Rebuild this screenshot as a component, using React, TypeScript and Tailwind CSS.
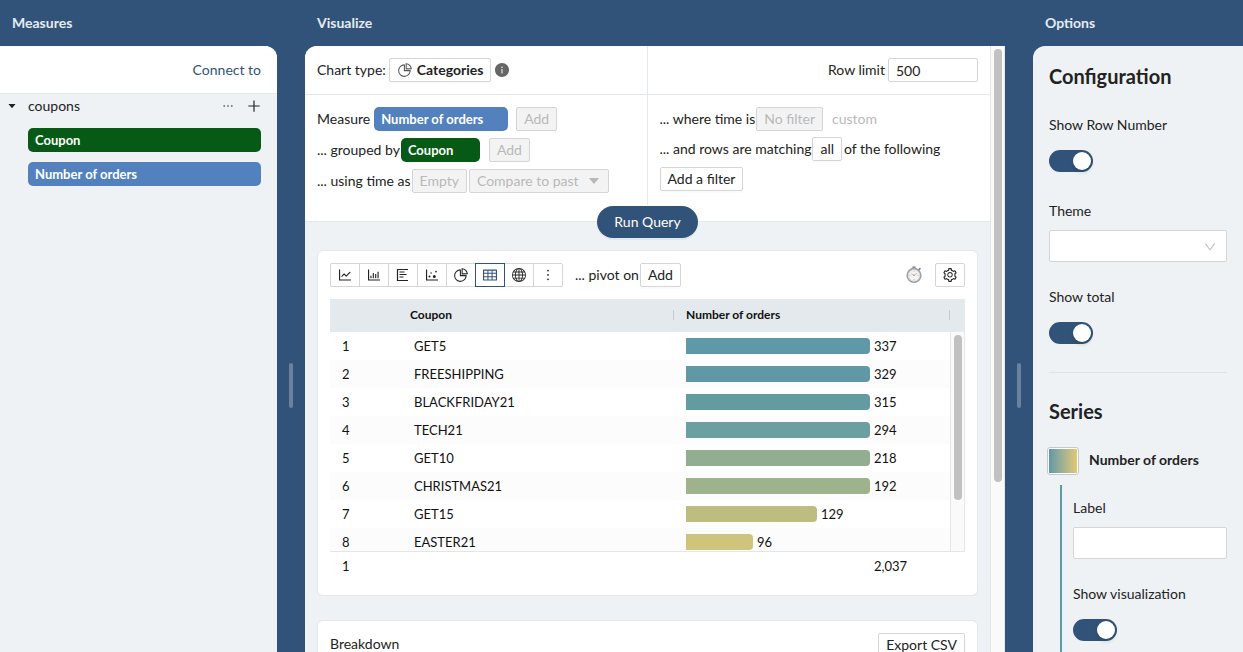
import React from 'react';
import {
  AiFillCaretDown,
  AiFillInfoCircle,
  AiOutlineBarChart,
  AiOutlineDotChart,
  AiOutlineDown,
  AiOutlineEllipsis,
  AiOutlineLineChart,
  AiOutlineMore,
  AiOutlinePieChart,
  AiOutlinePlus,
  AiOutlineSetting,
  AiOutlineTable,
} from 'react-icons/ai';
import { BsGlobe } from 'react-icons/bs';

const rows = [
  { name: 'GET5', value: 337, width: 184, color: '#5f98a6' },
  { name: 'FREESHIPPING', value: 329, width: 184, color: '#6099a5' },
  { name: 'BLACKFRIDAY21', value: 315, width: 184, color: '#649ba3' },
  { name: 'TECH21', value: 294, width: 184, color: '#6c9f9f' },
  { name: 'GET10', value: 218, width: 184, color: '#92ae90' },
  { name: 'CHRISTMAS21', value: 192, width: 184, color: '#9eb28b' },
  { name: 'GET15', value: 129, width: 131, color: '#bdbd7f' },
  { name: 'EASTER21', value: 96, width: 67, color: '#cdc57c' },
];

function Button({
  children,
  disabled = false,
  className = '',
}: {
  children: React.ReactNode;
  disabled?: boolean;
  className?: string;
}) {
  const tone = disabled
    ? 'border-[#d5d5d5] bg-[#f3f3f3] text-[#b9b9b9]'
    : 'border-[#d5d5d5] bg-white text-[#222] shadow-[0_2px_0_rgba(0,0,0,0.015)]';
  return (
    <button
      type="button"
      disabled={disabled}
      className={`flex h-6 shrink-0 items-center rounded-xs border px-[7px] whitespace-nowrap ${tone} ${className}`}
    >
      {children}
    </button>
  );
}

function Tag({ children, className }: { children: React.ReactNode; className: string }) {
  return (
    <div className={`flex h-6 items-center rounded-[5px] pl-[7px] text-[13px] font-bold text-white ${className}`}>
      {children}
    </div>
  );
}

function BarListIcon() {
  return (
    <svg width="16" height="16" viewBox="0 0 16 16" fill="none" stroke="currentColor">
      <path d="M2.5 2v12" strokeWidth="1.2" />
      <path d="M2 2.5h11M4.5 5h5M4.5 7.5h7M4.5 10h4M2 13.5h11" strokeWidth="1" />
    </svg>
  );
}

function StopwatchIcon() {
  return (
    <svg width="18" height="18" viewBox="0 0 18 18" fill="none">
      <path d="M7.4 0.4h3.2v2.4H7.4z" fill="#8a8d93" />
      <path d="M13.8 3.8l1.2-1.2" stroke="#777a80" strokeWidth="1.5" strokeLinecap="round" />
      <circle cx="9" cy="9.4" r="6.8" fill="#f4f4f1" stroke="#9b9ea6" strokeWidth="1.6" />
      <circle cx="9" cy="9.4" r="5.6" stroke="#d4d5d8" strokeWidth="0.8" />
      <path d="M9 4.8v1M9 13v1M4.4 9.4h1M12.6 9.4h1" stroke="#a4a6aa" strokeWidth="0.7" />
      <path d="M6.2 7.5L9 9.4l3-2.2" stroke="#c9a19b" strokeWidth="0.8" />
      <circle cx="9" cy="9.4" r="0.6" fill="#888" />
    </svg>
  );
}

function Switch({ id }: { id: string }) {
  return (
    <div className="flex h-8 items-center pt-0.5">
      <input
        id={id}
        type="checkbox"
        role="switch"
        defaultChecked
        className="h-[22px] w-11 cursor-pointer appearance-none rounded-full bg-[#bfbfbf] p-0.5 before:block before:size-[18px] before:rounded-full before:bg-white before:shadow-[0_2px_4px_rgba(0,35,11,0.2)] checked:bg-[#325379] checked:before:ml-[22px]"
      />
    </div>
  );
}

function Field({ id, label, children }: { id: string; label: string; children: React.ReactNode }) {
  return (
    <div className="mb-6">
      <label htmlFor={id} className="mb-2 block">
        {label}
      </label>
      {children}
    </div>
  );
}

function Gutter() {
  return (
    <div className="flex w-7 shrink-0 justify-center pt-[363px]">
      <div className="h-[45px] w-1 rounded-xs bg-[#6a82a0]" />
    </div>
  );
}

function PanelTitle({ children }: { children: React.ReactNode }) {
  return (
    <h2 className="shrink-0 py-3 pl-3 font-bold text-[#e5ebf1]">{children}</h2>
  );
}

function MeasuresPanel() {
  return (
    <section className="flex w-[277px] shrink-0 flex-col">
      <PanelTitle>Measures</PanelTitle>
      <div className="flex-1 overflow-hidden rounded-tr-xl bg-[#eef2f5]">
        <div className="flex h-12 items-center justify-end border-b border-[#e3e8ec] bg-white pr-4">
          <a href="#connect" className="text-[#325379]">
            Connect to
          </a>
        </div>
        <div className="flex h-6 items-center pr-[15px] pl-[7px]">
          <AiFillCaretDown className="size-[10px]" />
          <span className="ml-[11px] flex-1">coupons</span>
          <button type="button" aria-label="More" className="mr-[11px]">
            <AiOutlineEllipsis className="size-[14px]" />
          </button>
          <button type="button" aria-label="Add measure">
            <AiOutlinePlus className="size-4" />
          </button>
        </div>
        <div className="mt-[10px] mr-4 ml-7 flex flex-col gap-[10px]">
          <Tag className="bg-[#075a15]">Coupon</Tag>
          <Tag className="bg-[#5281be]">Number of orders</Tag>
        </div>
      </div>
    </section>
  );
}

function QueryBuilder() {
  return (
    <div className="border-b border-[#e3e8ec] bg-white pb-4">
      <div className="grid grid-cols-2">
        <div className="flex h-[49px] items-center gap-[3px] border-r border-b border-[#e3e8ec] pl-3">
          Chart type:
          <Button className="gap-1">
            <AiOutlinePieChart className="size-4 text-[#555]" />
            <span className="font-bold">Categories</span>
          </Button>
          <AiFillInfoCircle className="size-4 text-[#666]" />
        </div>
        <div className="flex h-[49px] items-center justify-end gap-[3px] border-b border-[#e3e8ec] pr-3">
          <label htmlFor="row-limit">Row limit</label>
          <input
            id="row-limit"
            defaultValue="500"
            className="h-6 w-[90px] rounded-xs border border-[#d5d5d5] bg-white px-[7px]"
          />
        </div>
        <div className="flex h-[110px] flex-col gap-[7px] border-r border-[#e3e8ec] pt-3 pl-3">
          <div className="flex h-6 items-center gap-1">
            Measure
            <Tag className="mr-1 w-[134px] bg-[#5281be]">Number of orders</Tag>
            <Button disabled>Add</Button>
          </div>
          <div className="flex h-6 items-center gap-px">
            ... grouped by
            <Tag className="mr-2 w-[79px] bg-[#075a15]">Coupon</Tag>
            <Button disabled>Add</Button>
          </div>
          <div className="flex h-6 items-center gap-px">
            ... using time as
            <Button disabled className="mr-px">Empty</Button>
            <Button disabled>
              Compare to past
              <AiFillCaretDown className="ml-2 size-[14px]" />
            </Button>
          </div>
        </div>
        <div className="flex flex-col gap-1.5 pt-3 pl-3">
          <div className="flex h-6 items-center gap-px">
            ... where time is
            <Button disabled>No filter</Button>
            <button type="button" disabled className="ml-2 text-[#b9b9b9]">
              custom
            </button>
          </div>
          <div className="flex h-6 items-center gap-px">
            ... and rows are matching
            <Button className="mr-px">all</Button>
            of the following
          </div>
          <div className="flex">
            <Button>Add a filter</Button>
          </div>
        </div>
      </div>
    </div>
  );
}

const chartKinds = [
  { label: 'Line chart', icon: <AiOutlineLineChart className="size-4" /> },
  { label: 'Bar chart', icon: <AiOutlineBarChart className="size-4" /> },
  { label: 'Horizontal bars', icon: <BarListIcon /> },
  { label: 'Scatter chart', icon: <AiOutlineDotChart className="size-4" /> },
  { label: 'Pie chart', icon: <AiOutlinePieChart className="size-4" /> },
  { label: 'Table', icon: <AiOutlineTable className="size-4" /> },
  { label: 'Map', icon: <BsGlobe className="size-[14px]" /> },
  { label: 'More charts', icon: <AiOutlineMore className="size-4" /> },
];

function ResultTable() {
  return (
    <div className="relative mt-3">
      <table className="block w-full text-[13px] text-[#111]">
        <thead className="block h-[33px] bg-[#e4e9ed] pr-[15px] text-[12px] leading-8 font-bold">
          <tr className="grid grid-cols-[80px_264fr_276fr] items-center text-left">
            <th aria-label="Row" />
            <th className="flex items-center justify-between">
              Coupon
              <span className="h-[10px] w-px bg-[#c7ccd1]" />
            </th>
            <th className="flex items-center justify-between pl-3">
              Number of orders
              <span className="h-[10px] w-px bg-[#c7ccd1]" />
            </th>
          </tr>
        </thead>
        <tbody className="block h-[220px] overflow-hidden border-b border-[#e3e6e9] pr-[15px]">
          {rows.map((row, i) => (
            <tr key={row.name} className="grid h-7 grid-cols-[80px_264fr_276fr] items-center even:bg-[#fcfcfc]">
              <td className="pl-3">{i + 1}</td>
              <td className="pl-1">{row.name}</td>
              <td className="flex items-center gap-1 pl-3">
                <span className="h-4 rounded-r-[4px]" style={{ width: row.width, background: row.color }} />
                {row.value}
              </td>
            </tr>
          ))}
        </tbody>
        <tfoot className="block pr-[15px]">
          <tr className="grid h-7 grid-cols-[80px_264fr_276fr] items-center">
            <td className="pl-3">1</td>
            <td />
            <td className="pl-[200px]">2,037</td>
          </tr>
        </tfoot>
      </table>
      <div className="absolute top-[33px] right-0 flex h-[219px] w-[15px] justify-center border-x border-[#e6e6e6] bg-[#fafafa] pt-[3px]">
        <div className="h-[165px] w-2 rounded-full bg-[#c1c1c1]" />
      </div>
    </div>
  );
}

function ResultCard() {
  return (
    <div className="mx-3 mt-3 h-[346px] rounded-md border border-[#e3e8ec] bg-white p-3">
      <div className="flex h-6 items-center">
        <div className="flex">
          {chartKinds.map((kind) => (
            <button
              key={kind.label}
              type="button"
              aria-label={kind.label}
              className={`-mr-px flex h-6 w-[30px] items-center justify-center border first:rounded-l-xs last:rounded-r-xs ${
                kind.label === 'Table' ? 'z-10 border-[#325379] text-[#325379]' : 'border-[#d5d5d5]'
              }`}
            >
              {kind.icon}
            </button>
          ))}
        </div>
        <span className="mr-px ml-[13px]">... pivot on</span>
        <Button>Add</Button>
        <div className="ml-auto flex items-center gap-3">
          <StopwatchIcon />
          <button
            type="button"
            aria-label="Settings"
            className="flex h-6 w-[30px] items-center justify-center rounded-xs border border-[#d5d5d5]"
          >
            <AiOutlineSetting className="size-4" />
          </button>
        </div>
      </div>
      <ResultTable />
    </div>
  );
}

function VisualizePanel() {
  return (
    <section className="flex min-w-0 flex-1 flex-col">
      <PanelTitle>Visualize</PanelTitle>
      <div className="flex min-h-0 flex-1 overflow-hidden rounded-tl-xl bg-[#eef2f5]">
        <div className="min-w-0 flex-1">
          <QueryBuilder />
          <div className="relative -mt-4 flex justify-center">
            <button
              type="button"
              className="h-8 rounded-full bg-[#325379] px-[17px] text-white shadow-[0_2px_0_rgba(0,0,0,0.045)]"
            >
              Run Query
            </button>
          </div>
          <ResultCard />
          <div className="mx-3 mt-6 flex items-start justify-between rounded-md border border-[#e3e8ec] bg-white p-3">
            <h3>Breakdown</h3>
            <Button>Export CSV</Button>
          </div>
        </div>
        <div className="flex w-[15px] shrink-0 justify-center border-x border-[#e6e6e6] bg-[#fafafa] pt-[3px]">
          <div className="h-[433px] w-2 rounded-full bg-[#c1c1c1]" />
        </div>
      </div>
    </section>
  );
}

function OptionsPanel() {
  return (
    <section className="flex w-[210px] shrink-0 flex-col">
      <PanelTitle>Options</PanelTitle>
      <div className="min-h-0 flex-1 overflow-hidden rounded-tl-xl bg-[#eef2f5] p-4">
        <h3 className="mb-6 text-[20px] leading-7 font-bold">Configuration</h3>
        <Field id="show-row-number" label="Show Row Number">
          <Switch id="show-row-number" />
        </Field>
        <Field id="theme" label="Theme">
          <div className="relative">
            <select
              id="theme"
              className="block h-8 w-full appearance-none rounded-xs border border-[#d5d5d5] bg-white px-3"
            />
            <AiOutlineDown className="pointer-events-none absolute top-[10px] right-[10px] size-[14px] text-[#bfbfbf]" />
          </div>
        </Field>
        <Field id="show-total" label="Show total">
          <Switch id="show-total" />
        </Field>
        <hr className="border-[#dde2e6]" />
        <h3 className="mt-6 mb-[22px] text-[20px] leading-7 font-bold">Series</h3>
        <div className="-ml-0.5 flex h-7 items-start gap-[10px]">
          <button
            type="button"
            aria-label="Series color"
            className="h-7 w-8 rounded-[3px] border border-[#c3c9ce] bg-white p-px"
          >
            <span className="block h-full w-full bg-linear-to-r from-[#5f98a6] to-[#e0c96f]" />
          </button>
          <span className="pt-0.5 font-bold">Number of orders</span>
        </div>
        <div className="mt-[10px] ml-[11px] border-l-2 border-[#5f98a6] pt-3 pb-6 pl-[11px]">
          <Field id="series-label" label="Label">
            <input
              id="series-label"
              className="block h-8 w-full rounded-xs border border-[#d5d5d5] bg-white px-3"
            />
          </Field>
          <Field id="show-visualization" label="Show visualization">
            <Switch id="show-visualization" />
          </Field>
        </div>
      </div>
    </section>
  );
}

export default function App() {
  return (
    <main className="flex h-screen overflow-hidden bg-[#325379] font-['Lato','Liberation_Sans',sans-serif] text-[14px] leading-[22px] text-[#222]">
      <MeasuresPanel />
      <Gutter />
      <VisualizePanel />
      <Gutter />
      <OptionsPanel />
    </main>
  );
}
